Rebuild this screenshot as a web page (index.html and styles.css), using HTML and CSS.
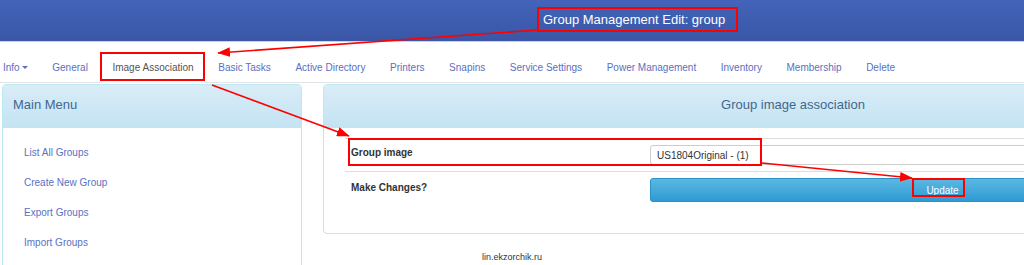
FILE: index.html
```html
<!DOCTYPE html>
<html lang="en">
<head>
    <meta charset="UTF-8">
    <meta name="viewport" content="width=device-width, initial-scale=1.0">
    <title>Group Management Edit: group</title>
    <link rel="stylesheet" href="styles.css">
</head>
<body>

    <header class="topbar">
        <h1 class="page-title">Group Management Edit: group</h1>
    </header>

    <nav class="tabs">
        <ul>
            <li><a href="#">Info<span class="caret"></span></a></li>
            <li><a href="#">General</a></li>
            <li class="active"><a href="#">Image Association</a></li>
            <li><a href="#">Basic Tasks</a></li>
            <li><a href="#">Active Directory</a></li>
            <li><a href="#">Printers</a></li>
            <li><a href="#">Snapins</a></li>
            <li><a href="#">Service Settings</a></li>
            <li><a href="#">Power Management</a></li>
            <li><a href="#">Inventory</a></li>
            <li><a href="#">Membership</a></li>
            <li><a href="#">Delete</a></li>
        </ul>
    </nav>

    <div class="content">
        <aside class="col-menu">
            <div class="panel">
                <div class="panel-heading">Main Menu</div>
                <ul class="menu-list">
                    <li><a href="#">List All Groups</a></li>
                    <li><a href="#">Create New Group</a></li>
                    <li><a href="#">Export Groups</a></li>
                    <li><a href="#">Import Groups</a></li>
                </ul>
            </div>
        </aside>

        <main class="col-main">
            <div class="panel">
                <div class="panel-heading centered">Group image association</div>
                <div class="panel-body">
                    <table class="form-table">
                        <tr>
                            <td class="label">Group image</td>
                            <td>
                                <select class="field">
                                    <option>US1804Original - (1)</option>
                                </select>
                            </td>
                        </tr>
                        <tr>
                            <td class="label changes">Make Changes?</td>
                            <td><button class="btn-update" type="button">Update</button></td>
                        </tr>
                    </table>
                </div>
            </div>
            <p class="credit">lin.ekzorchik.ru</p>
        </main>
    </div>

    <!-- red annotation marks drawn over the screenshot -->
    <svg class="marks" width="1024" height="265" viewBox="0 0 1024 265">
        <defs>
            <marker id="head" markerWidth="8" markerHeight="6" refX="7.5" refY="3" orient="auto" markerUnits="strokeWidth">
                <path d="M0,0 L8,3 L0,6 Z" fill="#f00"/>
            </marker>
        </defs>
        <g fill="none" stroke="#f00" stroke-width="2">
            <rect x="538" y="8" width="199" height="23"/>
            <rect x="101" y="53" width="103" height="27"/>
            <rect x="349" y="139" width="412" height="26"/>
            <rect x="913" y="179" width="51" height="17"/>
        </g>
        <g stroke="#f00" stroke-width="1.6">
            <line x1="538" y1="30" x2="218" y2="53" marker-end="url(#head)"/>
            <line x1="212" y1="85" x2="349" y2="136" marker-end="url(#head)"/>
            <line x1="762" y1="163" x2="912" y2="178" marker-end="url(#head)"/>
        </g>
    </svg>

</body>
</html>
```

FILE: styles.css
```css
/* page */
body { margin: 0; font-family: 'Liberation Sans', Arial, sans-serif; font-size: 10px; color: #333; background-color: #fff; overflow: hidden; position: relative; }
a { color: #5b6fc0; text-decoration: none; }

/* header */
.topbar { height: 41px; border-bottom: 1px solid #c9d2e6; background: linear-gradient(#4364ba, #3a56a6); }
.page-title { margin: 0; padding-left: 543px; font-size: 13px; font-weight: 400; line-height: 39px; color: #fff; }

/* tabs */
.tabs { margin-top: 10px; }
.tabs ul { display: flex; margin: 0 0 0 -8px; padding: 0; list-style: none; border-bottom: 1px solid #e3e3e3; }
.tabs li { margin: 0 2.6px -1px 0; }
.tabs a { display: block; padding: 0 10px; line-height: 29px; border: 1px solid transparent; border-radius: 3px 3px 0 0; }
.tabs li.active a { color: #555; border-color: #e3e3e3 #e3e3e3 #fff; background-color: #fff; }
.caret { display: inline-block; margin-left: 2px; vertical-align: 2px; border-top: 3px solid #5b6fc0; border-left: 3px solid transparent; border-right: 3px solid transparent; }

/* columns */
.content { display: flex; gap: 21px; margin-top: 1px; padding-left: 2px; }
.col-menu { flex: 0 0 300px; }
.col-main { flex: 0 0 940px; }

/* panels */
.panel { border: 1px solid #bce8f1; border-radius: 4px; background-color: #fff; }
.panel-heading { height: 42px; padding: 0 10px; line-height: 40px; font-size: 13px; color: #42678e; background: linear-gradient(#d9edf7, #c4e3f3); border-bottom: 1px solid #bce8f1; border-radius: 3px 3px 0 0; }
.panel-heading.centered { text-align: center; }
.panel-body { padding: 10px 21px 25px; }

/* main menu */
.menu-list { margin: 0; padding: 10px 0 0 21px; list-style: none; height: 140px; }
.menu-list li { line-height: 30px; }
.menu-list a { font-size: 10px; }

/* form table */
.form-table { width: 100%; border-collapse: collapse; }
.form-table td { padding: 6px; vertical-align: top; border-top: 1px solid #dedede; }
.form-table .label { width: 287px; font-weight: 700; line-height: 16px; color: #333; }
.form-table .changes { line-height: 20px; }
.field { display: block; width: 100%; height: 20px; padding: 0 6px; font-family: inherit; font-size: 10px; color: #333; background-color: #fff; border: 1px solid #ccc; border-radius: 3px; appearance: none; -webkit-appearance: none; }
.btn-update { display: block; width: 100%; height: 24px; font-family: inherit; font-size: 10px; color: #fff; background: linear-gradient(#5cb8e2, #2e9ad3); border: 1px solid #2b92c9; border-radius: 3px; }

/* footer */
.credit { margin: 16px 0 0; padding-left: 159px; font-size: 9px; line-height: 14px; color: #333; }

/* annotations */
.marks { position: absolute; top: 0; left: 0; pointer-events: none; }
```
